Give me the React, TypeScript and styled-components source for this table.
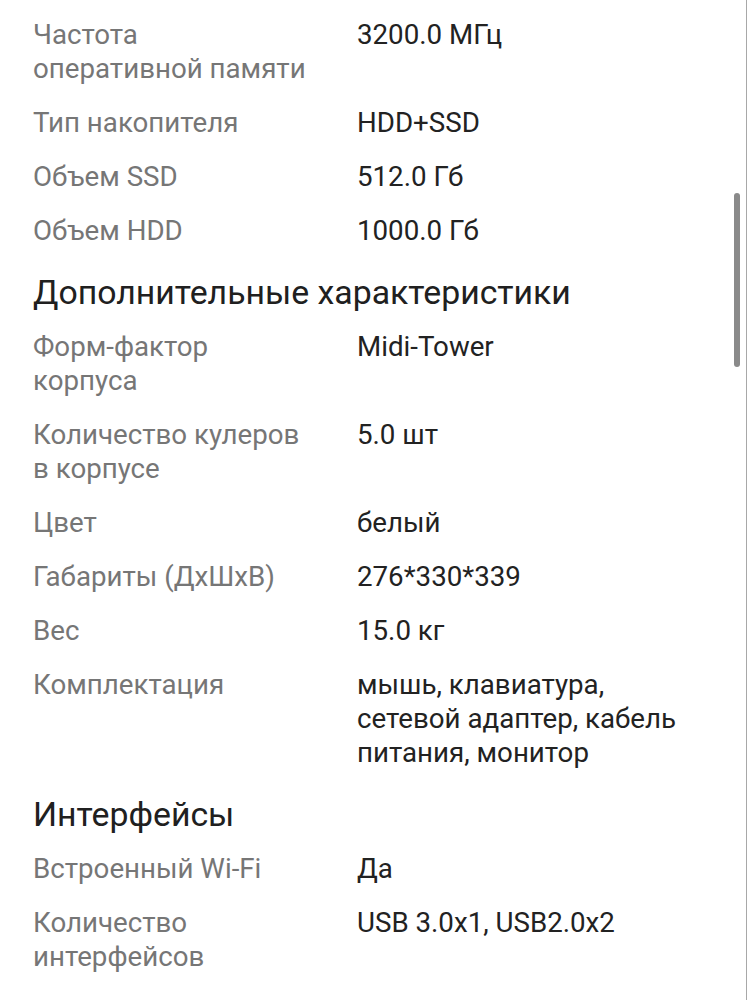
import React from "react";
import styled, { createGlobalStyle } from "styled-components";

const Global = createGlobalStyle`
  html, body { margin: 0; padding: 0; background: #fff; }
  body { font-family: Roboto, "Noto Sans", sans-serif; }
`;

const Page = styled.div`
  position: relative;
  width: 747px;
  height: 1000px;
  overflow: hidden;
  background: #fff;
  box-sizing: border-box;
  padding: 18px 40px 0 33px;
  border-right: 1px solid #a8a8a8;
`;

const Section = styled.section`
  display: flex;
  flex-direction: column;
`;

const Title = styled.h2`
  margin: 5px 0 17px;
  font-size: 33.8px;
  line-height: 40px;
  font-weight: 400;
  color: #202020;
  white-space: nowrap;
`;

const Row = styled.div`
  display: grid;
  grid-template-columns: 324px 1fr;
  padding: 0 0 20px;
  font-size: 27.7px;
  line-height: 34px;
`;

const Label = styled.div`
  color: #767676;
`;

const Value = styled.div`
  color: #222;
`;

const Scrollbar = styled.div`
  position: absolute;
  right: 6px;
  top: 193px;
  width: 6px;
  height: 174px;
  border-radius: 3px;
  background: #8a8a8a;
`;

type Item = [string, string];

const groups: { title?: string; items: Item[] }[] = [
  {
    items: [
      ["Частота\nоперативной памяти", "3200.0 МГц"],
      ["Тип накопителя", "HDD+SSD"],
      ["Объем SSD", "512.0 Гб"],
      ["Объем HDD", "1000.0 Гб"],
    ],
  },
  {
    title: "Дополнительные характеристики",
    items: [
      ["Форм-фактор\nкорпуса", "Midi-Tower"],
      ["Количество кулеров\nв корпусе", "5.0 шт"],
      ["Цвет", "белый"],
      ["Габариты (ДхШхВ)", "276*330*339"],
      ["Вес", "15.0 кг"],
      ["Комплектация", "мышь, клавиатура,\nсетевой адаптер, кабель\nпитания, монитор"],
    ],
  },
  {
    title: "Интерфейсы",
    items: [
      ["Встроенный Wi-Fi", "Да"],
      ["Количество\nинтерфейсов", "USB 3.0x1, USB2.0x2"],
    ],
  },
];

const Lines = ({ text }: { text: string }) => (
  <>
    {text.split("\n").map((l, i) => (
      <div key={i}>{l}</div>
    ))}
  </>
);

export default function App() {
  return (
    <>
      <Global />
      <Page>
        {groups.map((g, gi) => (
          <Section key={gi}>
            {g.title && <Title>{g.title}</Title>}
            {g.items.map(([l, v]) => (
              <Row key={l}>
                <Label>
                  <Lines text={l} />
                </Label>
                <Value>
                  <Lines text={v} />
                </Value>
              </Row>
            ))}
          </Section>
        ))}
        <Scrollbar />
      </Page>
    </>
  );
}
